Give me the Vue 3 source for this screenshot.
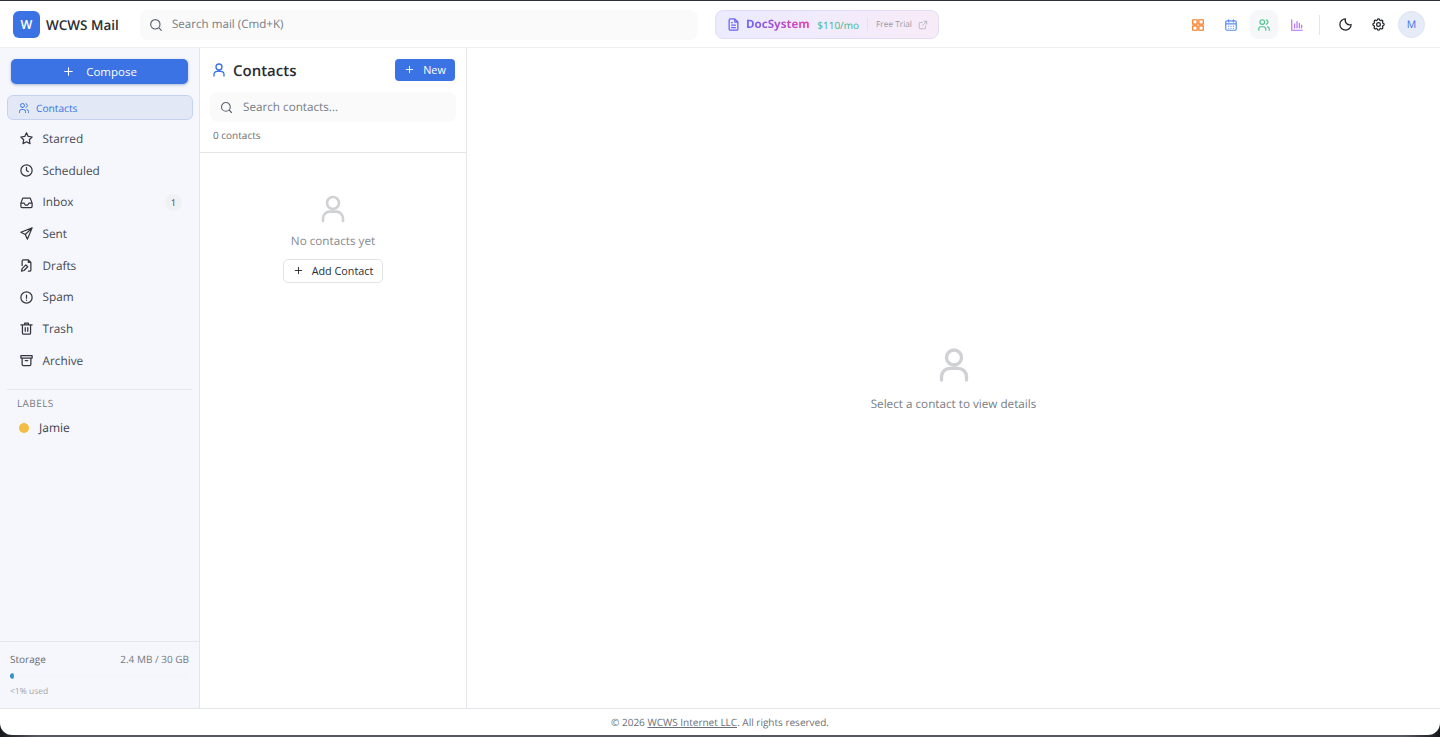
<script setup>
const nav = [
  { name: 'Starred', d: 'M12 3l2.8 5.7 6.2.9-4.5 4.4 1.1 6.2L12 17.3l-5.6 2.9 1.1-6.2L3 9.6l6.2-.9z' },
  { name: 'Scheduled', d: 'M12 21a9 9 0 1 0 0-18 9 9 0 0 0 0 18zM12 7v5l3 2' },
  { name: 'Inbox', d: 'M3 13l3-8h12l3 8v5a2 2 0 0 1-2 2H5a2 2 0 0 1-2-2zM3 13h5l2 3h4l2-3h5', badge: '1' },
  { name: 'Sent', d: 'M21 3L3 10l7 3.5L13.5 21zM21 3L10 13.5' },
  { name: 'Drafts', d: 'M5 11V5a2 2 0 0 1 2-2h8l4 4v12a2 2 0 0 1-2 2h-2M15 3v4h4M4 21l1-4 6-6 3 3-6 6zM5 11v1' },
  { name: 'Spam', d: 'M12 21a9 9 0 1 0 0-18 9 9 0 0 0 0 18zM12 8v5M12 16v.4' },
  { name: 'Trash', d: 'M3 6h18M9 6V3.5h6V6M5.5 6v13a2 2 0 0 0 2 2h9a2 2 0 0 0 2-2V6M10 10.5v6M14 10.5v6' },
  { name: 'Archive', d: 'M3 4h18v4H3zM5 8v10a2 2 0 0 0 2 2h10a2 2 0 0 0 2-2V8M10 12h4' },
]
const person = 'M12 12a4.5 4.5 0 1 0 0-9 4.5 4.5 0 0 0 0 9zM4.5 21v-2a5 5 0 0 1 5-5h5a5 5 0 0 1 5 5v2'
const people = 'M9 11a4 4 0 1 0 0-8 4 4 0 0 0 0 8zM3 21v-2a4 4 0 0 1 4-4h4a4 4 0 0 1 4 4v2M16 3.2a4 4 0 0 1 0 7.6M21 21v-2a4 4 0 0 0-3-3.85'
const search = 'M11 18a7 7 0 1 0 0-14 7 7 0 0 0 0 14zM20 20l-4-4'
const plus = 'M12 5v14M5 12h14'
</script>

<template>
  <div class="frame">
    <div class="window">
      <header class="topbar">
        <div class="brand">
          <span class="logo">W</span>
          <span class="brand-name">WCWS Mail</span>
        </div>
        <div class="top-search">
          <svg class="ic16 grey thin" viewBox="0 0 24 24"><path :d="search" /></svg>
          <span>Search mail (Cmd+K)</span>
        </div>
        <div class="promo">
          <svg class="ic15 violet" viewBox="0 0 24 24"><path d="M14 3H7a2 2 0 0 0-2 2v14a2 2 0 0 0 2 2h10a2 2 0 0 0 2-2V8zM14 3v5h5M9 13h6M9 17h6M9 9h1" /></svg>
          <span class="promo-name">DocSystem</span>
          <span class="promo-price">$110/mo</span>
          <span class="promo-sep"></span>
          <span class="promo-trial">Free Trial</span>
          <svg class="ic10 lightgrey" viewBox="0 0 24 24"><path d="M18 14v5a2 2 0 0 1-2 2H5a2 2 0 0 1-2-2V8a2 2 0 0 1 2-2h5M14 3h7v7M21 3L11 13" /></svg>
        </div>
        <div class="actions">
          <button class="icon-btn"><svg class="ic14 orange" viewBox="0 0 24 24"><path d="M3 3h7.500v7.500H3zM13.500 3H21v7.500h-7.500zM13.500 13.500H21V21h-7.500zM3 13.500h7.500V21H3z" /></svg></button>
          <button class="icon-btn"><svg class="ic14 blue" viewBox="0 0 24 24"><path d="M3 7a2 2 0 0 1 2-2h14a2 2 0 0 1 2 2v12a2 2 0 0 1-2 2H5a2 2 0 0 1-2-2zM3 10h18M8 3v4M16 3v4M8 14h.01M12 14h.01M16 14h.01M8 17.500h.01M12 17.500h.01M16 17.500h.01" /></svg></button>
          <button class="icon-btn current"><svg class="ic14 green" viewBox="0 0 24 24"><path :d="people" /></svg></button>
          <button class="icon-btn"><svg class="ic14 purple" viewBox="0 0 24 24"><path d="M3 3v18h18M8 17V10M12 17V6M16 17v-8M20 17v-5" /></svg></button>
          <span class="action-sep"></span>
          <button class="icon-btn"><svg class="ic15 dark" viewBox="0 0 24 24"><path d="M12 3a7 7 0 0 0 9 9 9 9 0 1 1-9-9z" /></svg></button>
          <button class="icon-btn"><svg class="ic15 dark" viewBox="0 0 24 24"><path d="M12 15a3 3 0 1 0 0-6 3 3 0 0 0 0 6z" /><path d="M10.300 4.300c.4-1.800 3-1.800 3.400 0a1.700 1.700 0 0 0 2.600 1.100c1.500-.9 3.300.8 2.400 2.400a1.700 1.700 0 0 0 1 2.500c1.800.4 1.800 3 0 3.400a1.700 1.700 0 0 0-1 2.600c.9 1.500-.9 3.300-2.400 2.400a1.700 1.700 0 0 0-2.600 1c-.4 1.800-3 1.800-3.400 0a1.700 1.700 0 0 0-2.600-1c-1.500.9-3.300-.9-2.400-2.400a1.700 1.700 0 0 0-1-2.600c-1.800-.4-1.800-3 0-3.400a1.700 1.700 0 0 0 1-2.500c-.9-1.600.9-3.300 2.400-2.400a1.700 1.700 0 0 0 2.600-1.100z" /></svg></button>
          <span class="avatar">M</span>
        </div>
      </header>

      <div class="body">
        <aside class="sidebar">
          <div class="side-top">
            <button class="compose">
              <svg class="ic13 white" viewBox="0 0 24 24"><path :d="plus" /></svg>
              <span>Compose</span>
            </button>
            <div class="active-item">
              <svg class="ic12 accent" viewBox="0 0 24 24"><path :d="people" /></svg>
              <span>Contacts</span>
            </div>
            <nav class="nav">
              <div v-for="item in nav" :key="item.name" class="nav-item">
                <svg class="ic15 slate" viewBox="0 0 24 24"><path :d="item.d" /></svg>
                <span class="nav-name">{{ item.name }}</span>
                <span v-if="item.badge" class="badge">{{ item.badge }}</span>
              </div>
            </nav>
            <div class="labels">
              <div class="labels-title">LABELS</div>
              <div class="label-item"><span class="dot"></span><span>Jamie</span></div>
            </div>
          </div>
          <div class="storage">
            <div class="storage-row"><span class="storage-key">Storage</span><span>2.4 MB / 30 GB</span></div>
            <div class="track"><div class="fill"></div></div>
            <div class="used">&lt;1% used</div>
          </div>
        </aside>

        <section class="list">
          <div class="list-head">
            <div class="list-title-row">
              <svg class="ic16 accent" viewBox="0 0 24 24"><path :d="person" /></svg>
              <h1 class="list-title">Contacts</h1>
              <button class="new-btn">
                <svg class="ic11 white" viewBox="0 0 24 24"><path :d="plus" /></svg>
                <span>New</span>
              </button>
            </div>
            <div class="list-search">
              <svg class="ic15 grey thin" viewBox="0 0 24 24"><path :d="search" /></svg>
              <span>Search contacts...</span>
            </div>
            <div class="count">0 contacts</div>
          </div>
          <div class="list-empty">
            <svg class="empty-ic" viewBox="0 0 24 24"><path :d="person" /></svg>
            <p class="empty-text">No contacts yet</p>
            <button class="add-btn">
              <svg class="ic11 dark" viewBox="0 0 24 24"><path :d="plus" /></svg>
              <span>Add Contact</span>
            </button>
          </div>
        </section>

        <main class="detail">
          <svg class="detail-ic" viewBox="0 0 24 24"><path :d="person" /></svg>
          <p class="detail-text">Select a contact to view details</p>
        </main>
      </div>

      <footer class="footer">
        <span>© 2026 <u>WCWS Internet LLC</u>. All rights reserved.</span>
      </footer>
    </div>
  </div>
</template>

<style>
html, body { margin: 0; background: #2b2f3a; }
</style>

<style scoped>
.frame {
  width: 1440px;
  height: 737px;
  background:
    linear-gradient(#2b2f3a, #2b2f3a) 0 0 / 100% 1px no-repeat,
    linear-gradient(90deg, #15171b, #55585e 36px, #55585e 1404px, #15171b);
  padding: 1px 0 2px;
  box-sizing: border-box;
  overflow: hidden;
  font-family: "Open Sans", "Noto Sans", sans-serif;
  text-rendering: geometricPrecision;
  color: #2b2e35;
}
.window {
  height: 734px;
  background: #fff;
  border-radius: 0 0 12px 12px;
  display: flex;
  flex-direction: column;
  overflow: hidden;
}
svg { fill: none; stroke: currentColor; stroke-width: 2; stroke-linecap: round; stroke-linejoin: round; flex: none; }
.thin { stroke-width: 1.800; }
.ic10 { width: 10px; height: 10px; }
.ic11 { width: 11px; height: 11px; }
.ic12 { width: 12px; height: 12px; }
.ic13 { width: 13px; height: 13px; }
.ic14 { width: 14px; height: 14px; stroke-width: 2; }
.ic15 { width: 15px; height: 15px; }
.ic16 { width: 16px; height: 16px; }
.grey { color: #5f6670; }
.lightgrey { color: #aeb1b8; }
.violet { color: #6b63f0; }
.orange { color: #f97316; }
.blue { color: #5b8def; }
.green { color: #4cc38f; }
.purple { color: #b06ff7; }
.dark { color: #24272d; }
.white { color: #fff; }
.accent { color: #3b73e4; }
.slate { color: #33373f; }

.topbar {
  height: 47px;
  box-sizing: border-box;
  flex: none;
  display: flex;
  align-items: center;
  padding: 1px 15px 0 13px;
  border-bottom: 1px solid #eceef2;
}
.brand { width: 127px; display: flex; align-items: center; gap: 6px; flex: none; }
.logo {
  width: 27px; height: 27px; border-radius: 6px; background: #3b73e4; color: #fff;
  display: flex; align-items: center; justify-content: center; font-size: 12.500px; font-weight: 600;
}
.brand-name { font-size: 13.500px; font-weight: 600; color: #2a2d33; white-space: nowrap; }
.top-search {
  width: 558px; height: 30px; flex: none; box-sizing: border-box; background: #fafafb; border-radius: 8px;
  display: flex; align-items: center; gap: 8px; padding-left: 8px; font-size: 11.600px; color: #777c84;
}
.promo {
  margin-left: 17px; width: 224px; height: 29px; box-sizing: border-box; flex: none;
  border: 1px solid #e2dcf8; border-radius: 8px;
  background: linear-gradient(90deg, #ebebff, #f8ebf8);
  display: flex; align-items: center; padding-left: 10px; white-space: nowrap;
}
.promo-name {
  margin-left: 5px; font-size: 11.600px; font-weight: 700;
  background: linear-gradient(90deg, #6b63f5, #ec3fa8);
  -webkit-background-clip: text; background-clip: text; color: transparent;
}
.promo-price { margin-left: 7.500px; font-size: 10px; font-weight: 500; color: #3fb58a; }
.promo-sep { width: 1px; height: 13px; background: #e6e0ee; margin: 0 8px 0 8px; }
.promo-trial { font-size: 8.300px; color: #9a9aa4; }
.promo .ic10 { margin-left: 6px; }
.actions { margin-left: auto; display: flex; align-items: center; gap: 5px; }
.icon-btn {
  width: 28px; height: 29px; padding: 0; border: 0; background: transparent; border-radius: 8px;
  display: flex; align-items: center; justify-content: center;
}
.icon-btn.current { background: #f5f7f9; }
.action-sep { width: 1px; height: 20px; background: #e4e6ea; margin: 0 6px 0 3px; }
.avatar {
  width: 27px; height: 27px; border-radius: 50%; background: #e6ebf8; border: 1px solid #dfe3ee; box-sizing: border-box;
  color: #3b73e4; font-size: 10.500px; font-weight: 500; display: flex; align-items: center; justify-content: center; margin-left: 1px;
}

.body { flex: 1; min-height: 0; display: flex; }
.sidebar {
  width: 200px; flex: none; box-sizing: border-box; background: #f6f7fc; border-right: 1px solid #e4e6ea;
  display: flex; flex-direction: column; justify-content: space-between;
}
.side-top { padding: 11px 7px 0; }
.compose {
  width: 177px; height: 25px; margin-left: 4px; border: 0; border-radius: 5px; background: #3b73e4; color: #fff;
  display: flex; align-items: center; justify-content: center; gap: 11px; font: 500 11.500px "Open Sans", sans-serif;
  box-shadow: 0 1px 3px rgba(30, 60, 130, .35); padding: 0;
}
.active-item {
  margin-top: 11px; height: 25px; width: 186px; box-sizing: border-box; border: 1px solid #c5d3f3; border-radius: 6px; background: #e3e8f7;
  color: #3b73e4; display: flex; align-items: center; gap: 6px; padding-left: 10px; font-size: 10.200px; font-weight: 500;
}
.nav { padding-top: 3px; }
.nav-item {
  height: 31.700px; display: flex; align-items: center; gap: 8.500px; padding: 0 10px 0 12px;
  font-size: 11.800px; color: #454950;
}
.nav-name { flex: 1; }
.badge {
  width: 17px; height: 17px; border-radius: 50%; background: #f0f1f4; font-size: 9.500px; font-weight: 500;
  display: flex; align-items: center; justify-content: center; color: #444850;
}
.labels { margin-top: 12px; border-top: 1px solid #e4e6ea; padding-top: 6px; }
.labels-title { padding-left: 10px; font-size: 10px; letter-spacing: .4px; color: #777b83; line-height: 15px; }
.label-item { height: 30px; margin-top: 2px; display: flex; align-items: center; gap: 10px; padding-left: 12px; font-size: 12px; color: #3d4149; }
.dot { width: 10px; height: 10px; border-radius: 50%; background: #f2bd42; }
.storage { height: 67px; box-sizing: border-box; border-top: 1px solid #e4e6ea; padding: 10px 10px 0; }
.storage-row { display: flex; justify-content: space-between; font-size: 10px; line-height: 15px; color: #777b83; }
.storage-key { color: #666a72; }
.track { height: 6px; margin-top: 5.500px; border-radius: 3px; background: #f5f6fb; overflow: hidden; }
.fill { width: 4px; height: 6px; border-radius: 3px; background: linear-gradient(90deg, #3b73e4, #2bb6a8); }
.used { margin-top: 7px; font-size: 8.500px; line-height: 12px; color: #a3a6ad; }

.list { width: 267px; flex: none; box-sizing: border-box; border-right: 1px solid #e4e6ea; }
.list-head { height: 105px; box-sizing: border-box; border-bottom: 1px solid #e4e6ea; padding: 11px 10px 0 10px; }
.list-title-row { height: 22px; display: flex; align-items: center; padding: 0 1px 0 1px; }
.list-title { flex: 1; margin: 1px 0 0 6px; font-size: 15px; font-weight: 600; color: #2a2d33; }
.new-btn {
  width: 60px; height: 22px; padding: 0 0 1px; border: 0; border-radius: 4px; background: #3b73e4; color: #fff;
  display: flex; align-items: center; justify-content: center; gap: 8px; font: 500 10.800px "Open Sans", sans-serif;
}
.list-search {
  margin-top: 11px; width: 246px; height: 30px; box-sizing: border-box; border-radius: 8px; background: #fafafb;
  display: flex; align-items: center; gap: 9px; padding-left: 9px; font-size: 11.700px; color: #777c84;
}
.count { margin: 6px 0 0 3px; font-size: 10px; line-height: 15px; color: #6b6f77; }
.list-empty { display: flex; flex-direction: column; align-items: center; padding-top: 40px; }
.empty-ic { width: 32px; height: 32px; color: #d0d1d4; }
.empty-text { margin: 8px 0 0; font-size: 11.700px; line-height: 17px; color: #85898f; }
.add-btn {
  margin-top: 9px; width: 100px; height: 24px; padding: 0 0 1px; background: #fff; border: 1px solid #e1e3e7; border-radius: 5px;
  display: flex; align-items: center; justify-content: center; gap: 8px; color: #2a2d33; font: 500 10.800px "Open Sans", sans-serif;
}
.detail { flex: 1; display: flex; flex-direction: column; align-items: center; padding-top: 297px; box-sizing: border-box; }
.detail-ic { width: 40px; height: 40px; color: #d0d1d4; }
.detail-text { margin: 11px 0 0; font-size: 11.700px; line-height: 16px; color: #787c84; }

.footer {
  height: 27px; flex: none; box-sizing: border-box; border-top: 1px solid #e4e6ea;
  display: flex; align-items: center; justify-content: center; font-size: 10px; color: #6b6f77;
}
</style>
